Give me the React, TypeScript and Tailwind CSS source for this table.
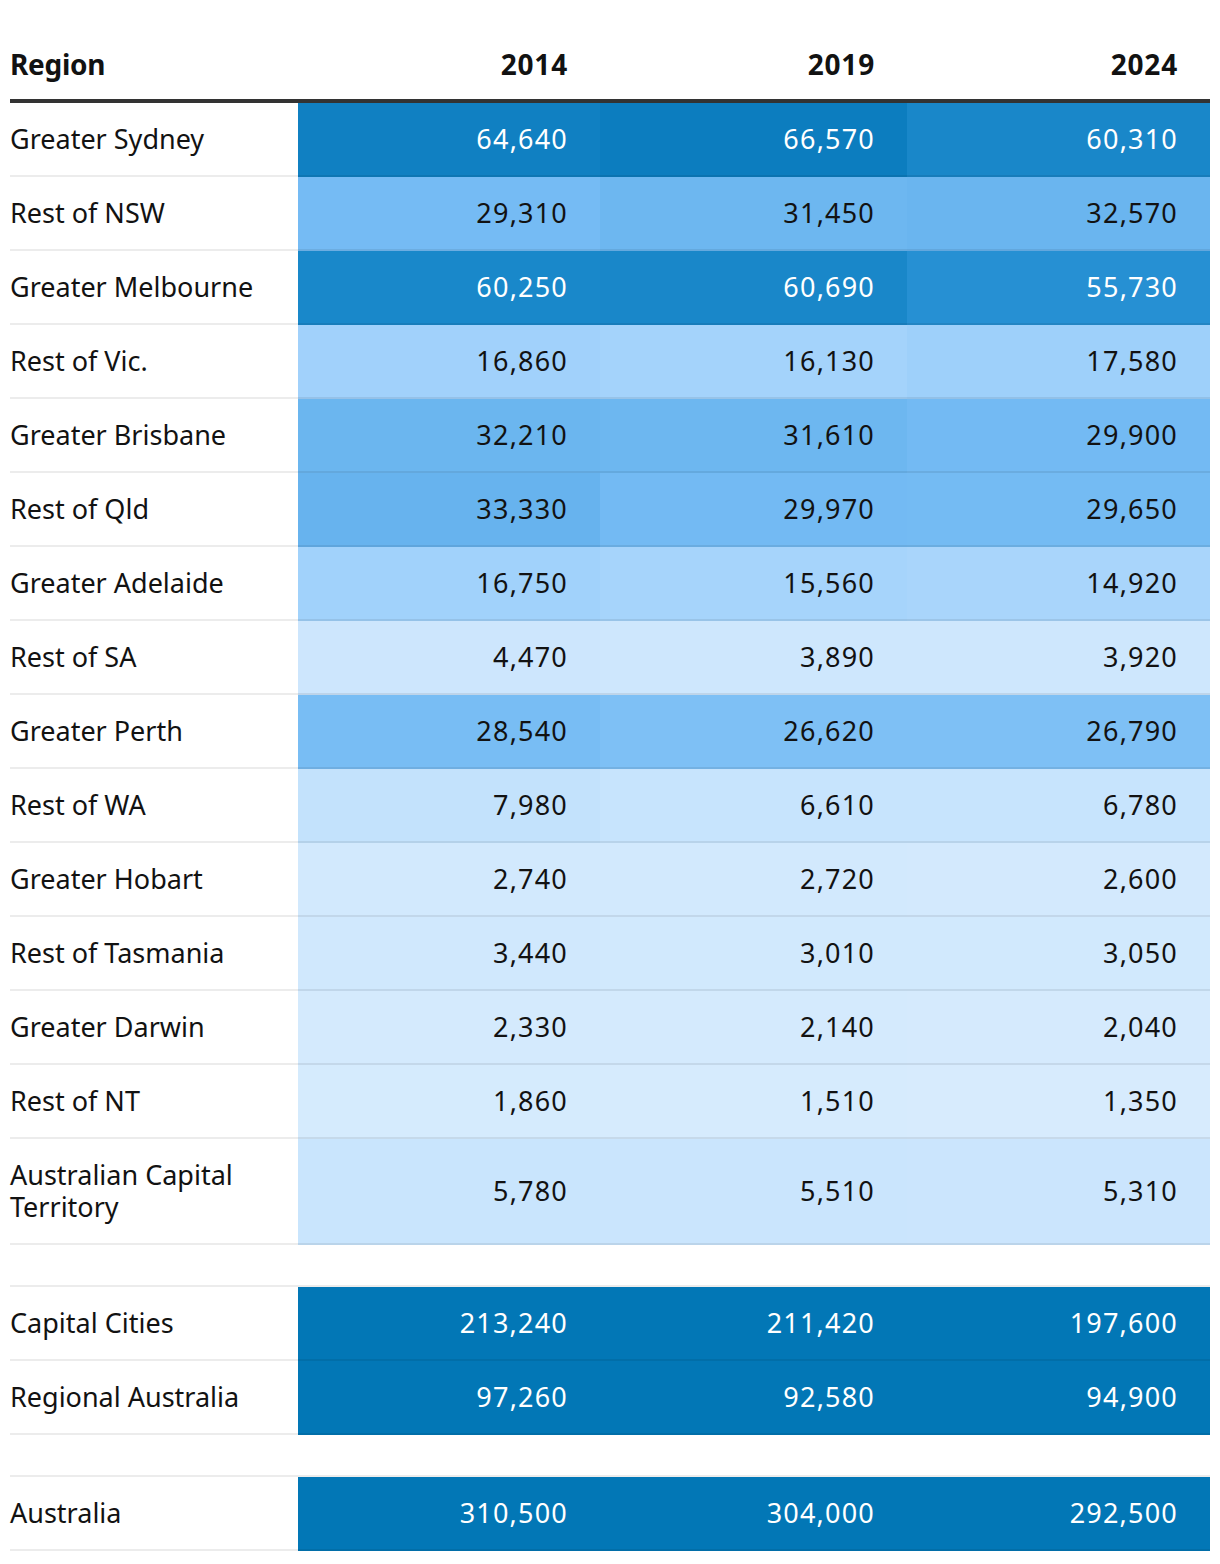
import React from "react";

type Row = { region: string; values: number[] };

const rows: Row[] = [
  { region: "Greater Sydney", values: [64640, 66570, 60310] },
  { region: "Rest of NSW", values: [29310, 31450, 32570] },
  { region: "Greater Melbourne", values: [60250, 60690, 55730] },
  { region: "Rest of Vic.", values: [16860, 16130, 17580] },
  { region: "Greater Brisbane", values: [32210, 31610, 29900] },
  { region: "Rest of Qld", values: [33330, 29970, 29650] },
  { region: "Greater Adelaide", values: [16750, 15560, 14920] },
  { region: "Rest of SA", values: [4470, 3890, 3920] },
  { region: "Greater Perth", values: [28540, 26620, 26790] },
  { region: "Rest of WA", values: [7980, 6610, 6780] },
  { region: "Greater Hobart", values: [2740, 2720, 2600] },
  { region: "Rest of Tasmania", values: [3440, 3010, 3050] },
  { region: "Greater Darwin", values: [2330, 2140, 2040] },
  { region: "Rest of NT", values: [1860, 1510, 1350] },
  { region: "Australian Capital Territory", values: [5780, 5510, 5310] },
];

const totals: Row[] = [
  { region: "Capital Cities", values: [213240, 211420, 197600] },
  { region: "Regional Australia", values: [97260, 92580, 94900] },
];

const national: Row = { region: "Australia", values: [310500, 304000, 292500] };

// colour scale stops: [value, r, g, b]
const stops: number[][] = [
  [1000, 216, 236, 253],
  [4000, 206, 231, 253],
  [10000, 190, 224, 252],
  [16000, 164, 211, 251],
  [29000, 118, 188, 244],
  [33000, 104, 180, 238],
  [55000, 40, 145, 212],
  [60000, 26, 136, 202],
  [66500, 12, 125, 191],
  [90000, 2, 119, 182],
];

function shade(v: number) {
  if (v <= stops[0][0]) return `rgb(${stops[0][1]},${stops[0][2]},${stops[0][3]})`;
  for (let i = 1; i < stops.length; i++) {
    if (v <= stops[i][0]) {
      const a = stops[i - 1];
      const b = stops[i];
      const t = (v - a[0]) / (b[0] - a[0]);
      const c = [1, 2, 3].map((k) => Math.round(a[k] + (b[k] - a[k]) * t));
      return `rgb(${c[0]},${c[1]},${c[2]})`;
    }
  }
  const l = stops[stops.length - 1];
  return `rgb(${l[1]},${l[2]},${l[3]})`;
}

const grid = "grid grid-cols-[288px_302px_307px_303px]";

function TableRow({ row }: { row: Row }) {
  return (
    <div className={grid}>
      <div className="flex items-center border-b-2 border-black/[0.075] py-5 pr-6 text-[27px] leading-8 text-[#121212]">
        <span className={row.region.length > 20 ? "max-w-[230px]" : ""}>{row.region}</span>
      </div>
      {row.values.map((v, i) => (
        <div
          key={i}
          className={`flex items-center justify-end border-b-2 border-black/[0.075] py-5 pr-8 text-[27px] leading-8 tracking-[1.2px] ${
            v >= 50000 ? "text-white" : "text-[#121212]"
          }`}
          style={{ backgroundColor: shade(v) }}
        >
          {v.toLocaleString("en-US")}
        </div>
      ))}
    </div>
  );
}

function Spacer() {
  return <div className="h-[42px] border-b-2 border-black/[0.075]" />;
}

export default function App() {
  return (
    <div className="min-h-[1564px] bg-white px-[10px] font-['Noto_Sans',sans-serif]">
      <div className="w-[1200px]">
        <div className={`${grid} h-[103px] items-end border-b-4 border-[#333333] pb-[19px] text-[28px] font-bold leading-8 text-[#121212]`}>
          <div className="tracking-[-0.3px]">Region</div>
          <div className="pr-8 text-right tracking-[0.8px]">2014</div>
          <div className="pr-8 text-right tracking-[0.8px]">2019</div>
          <div className="pr-8 text-right tracking-[0.8px]">2024</div>
        </div>
        {rows.map((r) => (
          <TableRow key={r.region} row={r} />
        ))}
        <Spacer />
        {totals.map((r) => (
          <TableRow key={r.region} row={r} />
        ))}
        <Spacer />
        <TableRow row={national} />
      </div>
    </div>
  );
}
